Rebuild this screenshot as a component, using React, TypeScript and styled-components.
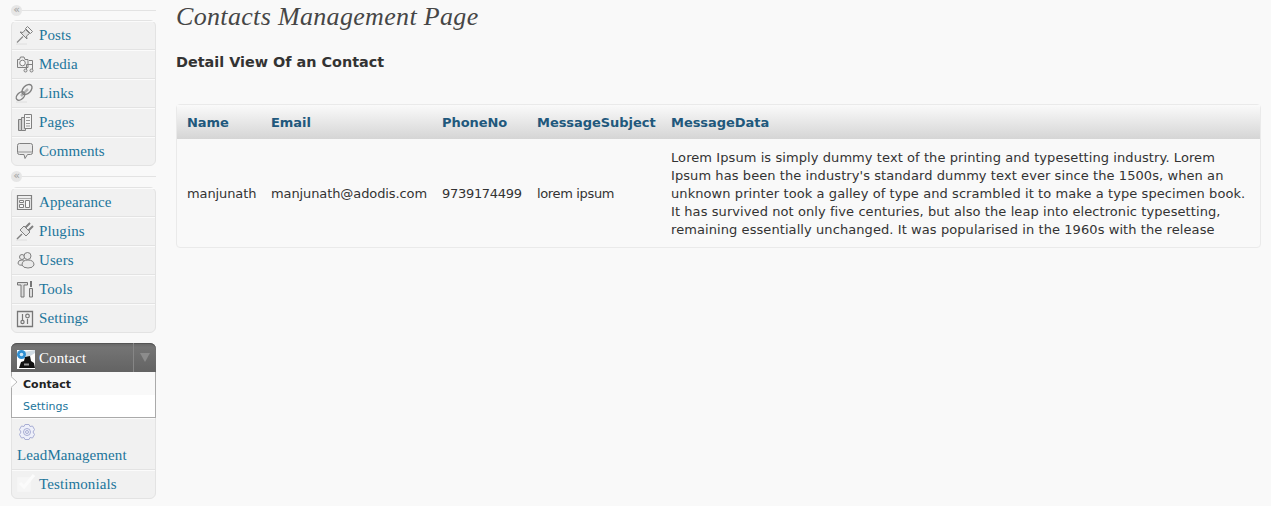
import * as React from "react";

import styled, { createGlobalStyle } from "styled-components";

const GlobalStyle = createGlobalStyle`
  html, body {
    margin: 0;
    padding: 0;
    background: #f9f9f9;
  }
`;

const Page = styled.div`
  display: flex;
  align-items: flex-start;
  min-height: 506px;
  background: #f9f9f9;
  color: #333;
  font-family: "DejaVu Sans", Verdana, sans-serif;
`;

const Sidebar = styled.nav`
  flex: 0 0 145px;
  margin-left: 11px;
`;

const Separator = styled.div<{ $height: number }>`
  display: flex;
  align-items: center;
  height: ${(p) => p.$height}px;
`;

const Collapse = styled.div`
  flex: 0 0 11px;
  height: 11px;
  border-radius: 50%;
  background: #e6e6e6;
  color: #a0a0a0;
  font: 11px/9px "DejaVu Sans", sans-serif;
  text-align: center;
`;

const SeparatorLine = styled.div`
  flex: 1;
  height: 1px;
  background: #e3e3e3;
`;

const MenuGroup = styled.ul<{ $gap?: number }>`
  margin: ${(p) => p.$gap ?? 0}px 0 0;
  padding: 0;
  list-style: none;
  background: #f1f1f1;
  border: 1px solid #e3e3e3;
  border-radius: 6px;
`;

const MenuItem = styled.li`
  display: flex;
  align-items: center;
  box-sizing: border-box;
  height: 29px;
  border-bottom: 1px solid #e3e3e3;
  box-shadow: inset 0 1px 0 #fbfbfb;

  &:last-child {
    height: 28px;
    border-bottom: 0;
  }
`;

const TallItem = styled(MenuItem)`
  flex-direction: column;
  align-items: flex-start;
  height: 52px;
`;

const TallIcon = styled.div`
  height: 24px;
  padding: 5px 0 0 7px;
  box-sizing: border-box;
`;

const IconBox = styled.svg`
  flex: 0 0 27px;
  width: 27px;
  height: 28px;
`;

const ItemLabel = styled.a<{ $indent?: number }>`
  padding-left: ${(p) => p.$indent ?? 0}px;
  color: #21759b;
  font-family: "Liberation Serif", Georgia, serif;
  font-size: 15px;
  line-height: 26px;
  letter-spacing: 0.1px;
  text-decoration: none;
`;

const ContactHead = styled.div`
  display: flex;
  align-items: center;
  box-sizing: border-box;
  height: 29px;
  margin: -1px -1px 0;
  border-radius: 6px 6px 0 0;
  background: linear-gradient(#666, #747474 15%, #636363);
  box-shadow: inset 0 1px 0 #555;
`;

const HeadLabel = styled(ItemLabel)`
  flex: 1;
  color: #fff;
`;

const Toggle = styled.div`
  display: flex;
  align-items: center;
  justify-content: center;
  box-sizing: border-box;
  flex: 0 0 23px;
  height: 100%;
  border-left: 1px solid #868686;
`;

const ToggleArrow = styled.div`
  width: 0;
  height: 0;
  border-style: solid;
  border-width: 9px 5px 0;
  border-color: #8c8c8c transparent transparent;
`;

const SubMenu = styled.ul`
  position: relative;
  box-sizing: border-box;
  height: 46px;
  margin: 0 -1px;
  padding: 0;
  list-style: none;
  background: #fff;
  border: 1px solid #aaa;
  border-top: 0;
`;

const SubArrow = styled.svg`
  position: absolute;
  left: -1px;
  top: 4px;
  width: 7px;
  height: 12px;
`;

const SubItem = styled.li<{ $current?: boolean }>`
  box-sizing: border-box;
  height: ${(p) => (p.$current ? 23 : 22)}px;
  padding: ${(p) => (p.$current ? 1 : 0)}px 0 0 11px;
  background: ${(p) => (p.$current ? "#f9f9f9" : "#fff")};
  color: ${(p) => (p.$current ? "#222" : "#21759b")};
  font-size: 11px;
  font-weight: ${(p) => (p.$current ? 700 : 400)};
  line-height: 23px;
`;

const Main = styled.main`
  flex: 1;
  min-width: 0;
  margin: 0 10px 0 20px;
`;

const Title = styled.h2`
  margin: 0;
  color: #464646;
  font-family: "Liberation Serif", Georgia, serif;
  font-size: 26px;
  font-style: italic;
  font-weight: 400;
  line-height: 34px;
  letter-spacing: 0.33px;
`;

const SubTitle = styled.h3`
  margin: 19px 0 0;
  color: #333;
  font-size: 14.4px;
  font-weight: 700;
  line-height: 18px;
`;

const Table = styled.table`
  box-sizing: border-box;
  width: 100%;
  margin-top: 33px;
  table-layout: fixed;
  border-collapse: separate;
  border-spacing: 0;
  border: 1px solid #eaeaea;
  border-radius: 4px;
  font-size: 13px;
`;

const Col = styled.col<{ $width: number }>`
  width: ${(p) => p.$width}px;
`;

const HeadCell = styled.th`
  height: 34px;
  padding: 0 0 0 10px;
  background: linear-gradient(#fafafa, #d5d5d5);
  color: #21587c;
  font-weight: 700;
  letter-spacing: -0.05px;
  text-align: left;
`;

const Cell = styled.td<{ $tracking: number }>`
  padding: 10px 0 8px 10px;
  color: #333;
  line-height: 18px;
  letter-spacing: ${(p) => p.$tracking}px;
  white-space: nowrap;
`;

const columns = [84, 171, 95, 134];
const headers = ["Name", "Email", "PhoneNo", "MessageSubject", "MessageData"];
const firstGroup = ["Posts", "Media", "Links", "Pages", "Comments"];
const secondGroup = ["Appearance", "Plugins", "Users", "Tools", "Settings"];

const message = [
  "Lorem Ipsum is simply dummy text of the printing and typesetting industry. Lorem",
  "Ipsum has been the industry's standard dummy text ever since the 1500s, when an",
  "unknown printer took a galley of type and scrambled it to make a type specimen book.",
  "It has survived not only five centuries, but also the leap into electronic typesetting,",
  "remaining essentially unchanged. It was popularised in the 1960s with the release",
];

const glyphs: Record<string, React.ReactNode> = {
  Posts: (
    <g fill="#e2e2e2" stroke="#808080">
      <path d="M4 23h11" fill="none" stroke="#dedede" />
      <path d="M5 21.500l6-6" fill="none" stroke="#8c8c8c" strokeWidth="1.200" />
      <path d="M8 11l7 7-.5-3 3-2.500-4-4-2.500 3z" />
      <path d="M13.500 7.500l2-2 5 5-2 2z" fill="#f2f2f2" />
    </g>
  ),
  Media: (
    <g fill="none" stroke="#808080">
      <path d="M5.500 9.500h2l1-2.500h3.500l1 2.500h3v8h-10.500z" fill="#ececec" />
      <circle cx="10.500" cy="13" r="2.800" fill="#f8f8f8" />
      <path d="M17 10.500h3.500v9M14.500 14.500h6M14.500 14.500v5.500" />
      <circle cx="13.500" cy="20.500" r="1.500" fill="#e8e8e8" />
      <circle cx="19.500" cy="20.500" r="1.500" fill="#e8e8e8" />
    </g>
  ),
  Links: (
    <g fill="none" stroke="#808080" strokeWidth="1.400">
      <path d="M4 23h11" stroke="#dedede" strokeWidth="1" />
      <path d="M9 17l7-7" stroke="#b5b5b5" strokeWidth="2.500" />
      <ellipse cx="8.500" cy="17" rx="5" ry="3.300" transform="rotate(-45 8.500 17)" />
      <ellipse cx="15" cy="10.500" rx="6" ry="3.800" transform="rotate(-45 15 10.500)" />
    </g>
  ),
  Pages: (
    <g fill="#e6e6e6" stroke="#808080">
      <path d="M6.500 11.500h5v11h-5z" fill="#ccc" />
      <path d="M9.500 9.500h4v13h-4z" fill="#d8d8d8" />
      <path d="M12.500 6.500h7v14h-7z" fill="#f4f4f4" />
      <path d="M14 9.500h4M14 12.500h4M14 15.500h4M14 18h4" stroke="#999" />
    </g>
  ),
  Comments: (
    <g fill="#e8e8e8" stroke="#808080">
      <path d="M7.500 6.500h11q2 0 2 2v7q0 2-2 2h-3l-2.500 4-1-4h-4.500q-2 0-2-2v-7q0-2 2-2z" />
      <path d="M6 15h14" stroke="#bdbdbd" strokeWidth="2" />
    </g>
  ),
  Appearance: (
    <g fill="none" stroke="#808080">
      <path d="M5.500 7.500h14v14h-14z" fill="#eee" strokeWidth="1.200" />
      <path d="M6 10.500h13" stroke="#aaa" />
      <path d="M7.500 12.500h4v2h-4zM7.500 16.500h4v3h-4zM13.500 12.500h4v7h-4z" fill="#fafafa" />
    </g>
  ),
  Plugins: (
    <g fill="#e6e6e6" stroke="#808080">
      <path d="M4 23h11" fill="none" stroke="#dedede" />
      <path d="M10 17l-5 5" fill="none" strokeWidth="1.500" />
      <path d="M8 13l6 6 4-4-6-6z" />
      <path d="M13.500 10.500l4.500-4.500M16.500 13.500l4.500-4.500" fill="none" strokeWidth="2" />
    </g>
  ),
  Users: (
    <g fill="#eaeaea" stroke="#808080">
      <circle cx="10" cy="11" r="2.500" />
      <circle cx="15.500" cy="10" r="3.500" />
      <path d="M6 17q0-3 4-3t3 5q-7 1-7-2z" />
      <path d="M10 19q0-5 6-5t6 5q-1 3-6 3t-6-3z" />
    </g>
  ),
  Tools: (
    <g fill="#dcdcdc" stroke="#777">
      <path d="M5.500 7.500h10v2.500h-3.500v12h-3v-12h-3.500z" />
      <path d="M19 6v6" fill="none" strokeWidth="2" />
      <path d="M17.500 13.500h3v8.500h-3z" />
    </g>
  ),
  Settings: (
    <g fill="none" stroke="#777">
      <path d="M5.500 7.500h15v15h-15z" fill="#efefef" strokeWidth="1.300" />
      <path d="M10.500 10v6M15.500 15v5" strokeWidth="1.200" />
      <circle cx="10.500" cy="18" r="1.600" strokeWidth="1.200" />
      <circle cx="15.500" cy="12" r="1.800" strokeWidth="1.200" />
    </g>
  ),
  Testimonials: (
    <g fill="none">
      <path d="M5.500 7.500h13v14h-13z" fill="#f6f6f6" stroke="#f5f5f5" />
      <path d="M8 13l4 4 10-12" stroke="#fbfbfb" strokeWidth="3" />
    </g>
  ),
};

const Icon: React.FunctionComponent<{ name: string }> = ({ name }) => (
  <IconBox viewBox="0 0 27 28">{glyphs[name]}</IconBox>
);

const Gear = () => (
  <svg width="16" height="18" viewBox="0 0 16 18">
    <g fill="#eef0fa" stroke="#a9aed4">
      <path d="M6 1.500h4l1 2 2.500-.5 2 3.500-1.500 2.500 1.500 2.500-2 3.500-2.500-.5-1 2h-4l-1-2-2.500.5-2-3.500 1.500-2.500-1.500-2.500 2-3.500 2.500.5z" />
      <circle cx="8" cy="9" r="3.500" />
      <circle cx="8" cy="9" r="1.500" />
    </g>
  </svg>
);

const ContactIcon = () => (
  <IconBox viewBox="0 0 27 28">
    <path d="M6 6h18v19h-18z" fill="#fff" />
    <path d="M13 8l11-2v3l-8 5z" fill="#cfdbe4" />
    <circle cx="10.500" cy="10.500" r="4.500" fill="#2f8fd3" />
    <circle cx="10.500" cy="10.500" r="1.800" fill="#cfe8f8" />
    <path d="M8 24l2-6 3-1 1-4 5-1 1 5 3 2 1 5z" fill="#111" />
    <path d="M13 19.500h5v2h-5z" fill="#9a9a9a" />
  </IconBox>
);

const App = () => (
  <Page>
    <GlobalStyle />
    <Sidebar>
      <Separator $height={20}>
        <Collapse>«</Collapse>
        <SeparatorLine />
      </Separator>
      <MenuGroup>
        {firstGroup.map((name) => (
          <MenuItem key={name}>
            <Icon name={name} />
            <ItemLabel>{name}</ItemLabel>
          </MenuItem>
        ))}
      </MenuGroup>
      <Separator $height={21}>
        <Collapse>«</Collapse>
        <SeparatorLine />
      </Separator>
      <MenuGroup>
        {secondGroup.map((name) => (
          <MenuItem key={name}>
            <Icon name={name} />
            <ItemLabel>{name}</ItemLabel>
          </MenuItem>
        ))}
      </MenuGroup>
      <MenuGroup $gap={10}>
        <ContactHead>
          <ContactIcon />
          <HeadLabel $indent={1}>Contact</HeadLabel>
          <Toggle>
            <ToggleArrow />
          </Toggle>
        </ContactHead>
        <SubMenu>
          <SubArrow viewBox="0 0 7 12">
            <path d="M0 0l6 6-6 6z" fill="#fff" />
            <path d="M0 .5l6 5.500-6 5.500" fill="none" stroke="#bbb" />
          </SubArrow>
          <SubItem $current>Contact</SubItem>
          <SubItem>Settings</SubItem>
        </SubMenu>
        <TallItem>
          <TallIcon>
            <Gear />
          </TallIcon>
          <ItemLabel $indent={5}>LeadManagement</ItemLabel>
        </TallItem>
        <MenuItem>
          <Icon name="Testimonials" />
          <ItemLabel>Testimonials</ItemLabel>
        </MenuItem>
      </MenuGroup>
    </Sidebar>
    <Main>
      <Title>Contacts Management Page</Title>
      <SubTitle>Detail View Of an Contact</SubTitle>
      <Table>
        <colgroup>
          {columns.map((width) => (
            <Col key={width} $width={width} />
          ))}
          <col />
        </colgroup>
        <thead>
          <tr>
            {headers.map((header) => (
              <HeadCell key={header}>{header}</HeadCell>
            ))}
          </tr>
        </thead>
        <tbody>
          <tr>
            <Cell $tracking={-0.1}>manjunath</Cell>
            <Cell $tracking={-0.1}>manjunath@adodis.com</Cell>
            <Cell $tracking={-0.3}>9739174499</Cell>
            <Cell $tracking={-0.35}>lorem ipsum</Cell>
            <Cell $tracking={0.08}>
              {message.map((line) => (
                <div key={line}>{line}</div>
              ))}
            </Cell>
          </tr>
        </tbody>
      </Table>
    </Main>
  </Page>
);

export default App;
